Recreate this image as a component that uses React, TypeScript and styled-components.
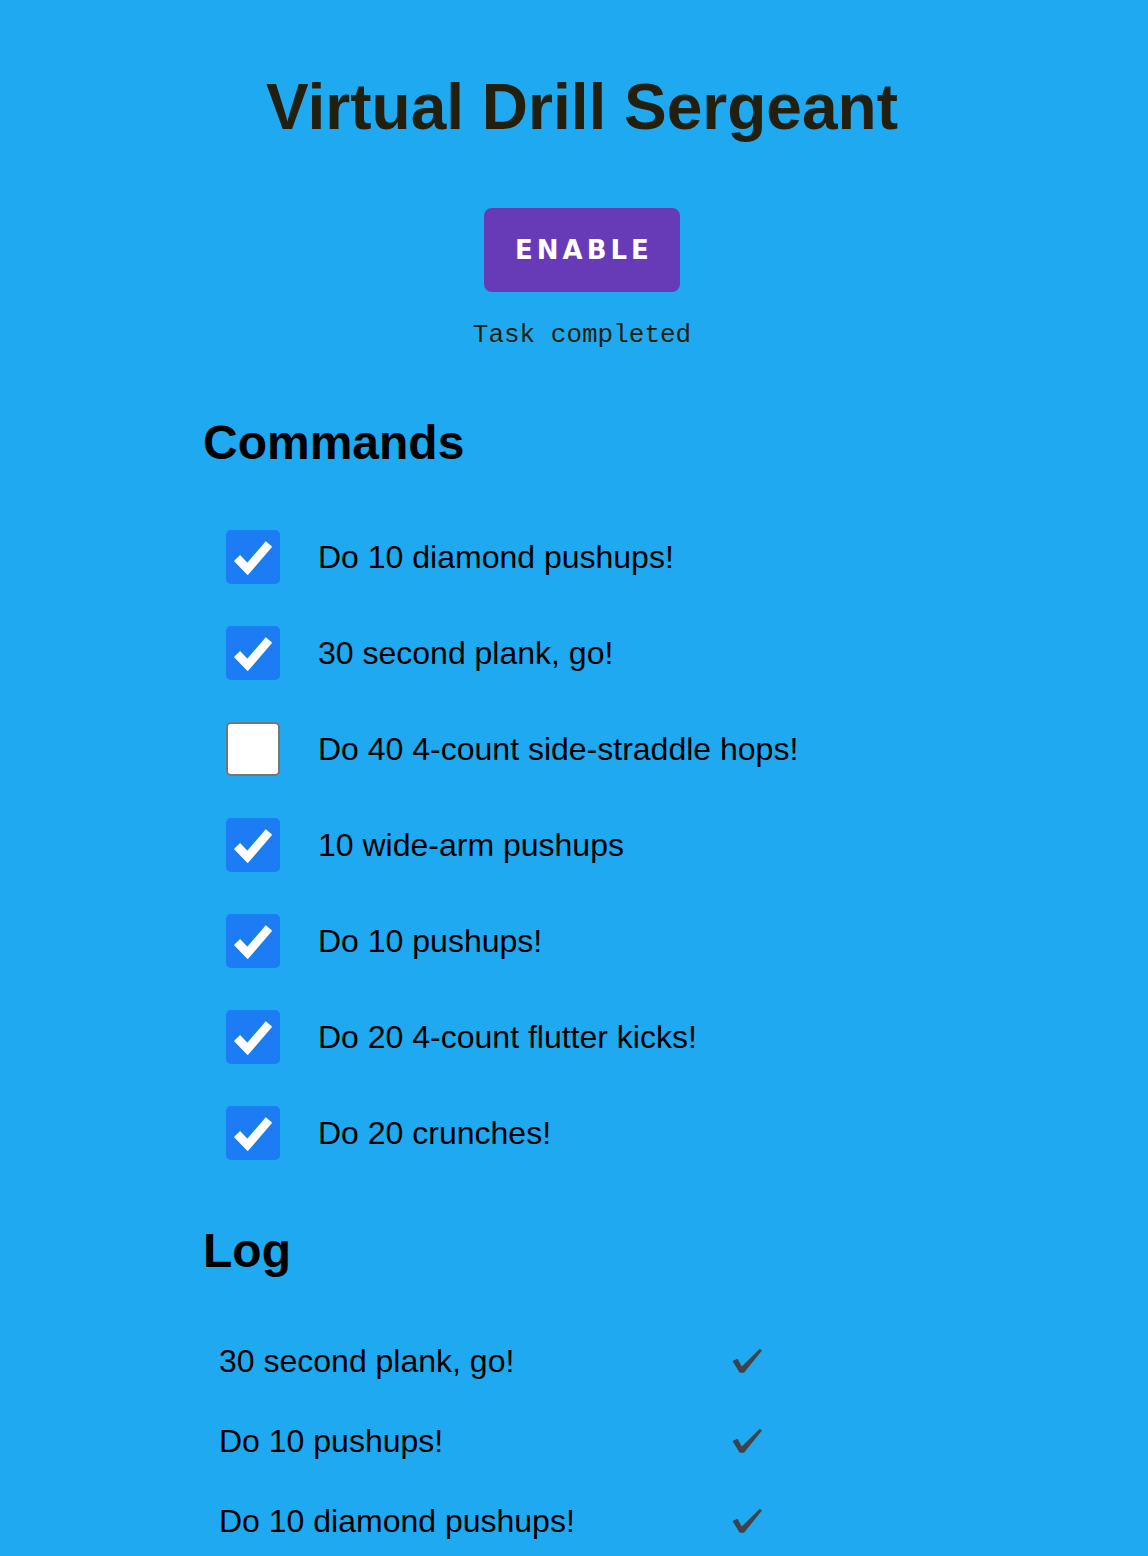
import { createGlobalStyle, styled } from 'styled-components'

const commands = [
  { text: 'Do 10 diamond pushups!', done: true },
  { text: '30 second plank, go!', done: true },
  { text: 'Do 40 4-count side-straddle hops!', done: false },
  { text: '10 wide-arm pushups', done: true },
  { text: 'Do 10 pushups!', done: true },
  { text: 'Do 20 4-count flutter kicks!', done: true },
  { text: 'Do 20 crunches!', done: true }
]

const log = ['30 second plank, go!', 'Do 10 pushups!', 'Do 10 diamond pushups!']

const GlobalStyle = createGlobalStyle`
  html, body {
    margin: 0;
    background: #1fa9f1;
  }

  body {
    font-family: "Liberation Sans", Arial, sans-serif;
    color: #000;
  }
`

const Header = styled.header`
  display: flex;
  flex-direction: column;
  align-items: center;
  padding-left: 16px;
`

const Title = styled.h1`
  margin: 75px 0 0;
  font-size: 64px;
  line-height: 64px;
  font-weight: 700;
  color: #231f0f;
`

const EnableButton = styled.button`
  margin-top: 69px;
  width: 196px;
  height: 84px;
  border: none;
  border-radius: 8px;
  background: #673ab7;
  color: #fff;
  font-family: "DejaVu Sans", sans-serif;
  font-weight: 700;
  font-size: 26px;
  letter-spacing: 4px;
  padding: 0 0 0 4px;
  cursor: pointer;
`

const Status = styled.div`
  margin-top: 30px;
  font-family: "Liberation Mono", "Courier New", monospace;
  font-size: 26px;
  line-height: 26px;
  color: #231f0f;
`

const Section = styled.section`
  padding-left: 203px;
`

const Heading = styled.h2<{ $top: number }>`
  margin: ${p => p.$top}px 0 0;
  font-size: 48px;
  line-height: 48px;
  font-weight: 700;
`

const CommandList = styled.ul`
  list-style: none;
  margin: 42px 0 0;
  padding: 0;
`

const CommandRow = styled.li`
  display: flex;
  align-items: center;
  gap: 38px;
  height: 96px;
  padding-left: 23px;
  font-size: 32px;
  line-height: 32px;
`

const Box = styled.span<{ $checked: boolean }>`
  display: flex;
  align-items: center;
  justify-content: center;
  box-sizing: border-box;
  width: 54px;
  height: 54px;
  border-radius: 5px;
  background: ${p => (p.$checked ? '#1b7cf4' : '#fff')};
  border: ${p => (p.$checked ? 'none' : '2px solid #767676')};
`

const LogList = styled.ul`
  list-style: none;
  margin: 46px 0 0;
  padding: 0;
`

const LogRow = styled.li`
  display: grid;
  grid-template-columns: 512px auto;
  align-items: center;
  height: 80px;
  padding-left: 16px;
  font-size: 32px;
  line-height: 32px;
`

const Tick = () => (
  <svg width="54" height="54" viewBox="0 0 54 54">
    <polyline points="11,28 21.5,39 43,14" fill="none" stroke="#fff" strokeWidth="8.5" />
  </svg>
)

const LogTick = () => (
  <svg width="32" height="28" viewBox="0 0 32 28">
    <path
      d="M1.5 14 L6.5 11.8 L10.8 19.5 L28.8 1.8 L31 3.6 L13 25.8 L8.6 25.8 Z"
      fill="#3f4347"
    />
  </svg>
)

export default function App () {
  return (
    <>
      <GlobalStyle />
      <Header>
        <Title>Virtual Drill Sergeant</Title>
        <EnableButton>ENABLE</EnableButton>
        <Status>Task completed</Status>
      </Header>
      <Section>
        <Heading $top={71}>Commands</Heading>
        <CommandList>
          {commands.map(c => (
            <CommandRow key={c.text}>
              <Box $checked={c.done}>{c.done && <Tick />}</Box>
              {c.text}
            </CommandRow>
          ))}
        </CommandList>
        <Heading $top={46}>Log</Heading>
        <LogList>
          {log.map(item => (
            <LogRow key={item}>
              <span>{item}</span>
              <LogTick />
            </LogRow>
          ))}
        </LogList>
      </Section>
    </>
  )
}
